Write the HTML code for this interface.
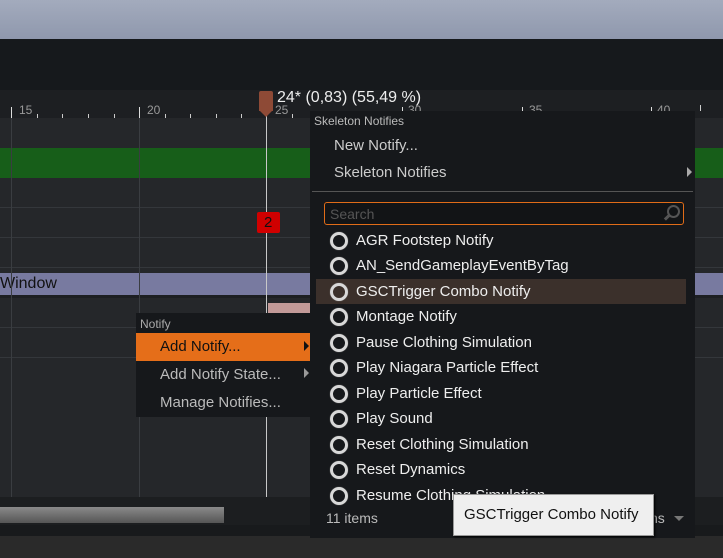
<!DOCTYPE html>
<html><head><style>
*{margin:0;padding:0;box-sizing:border-box}
body{width:723px;height:558px;overflow:hidden;position:relative;background:#25272a;font-family:"Liberation Sans",sans-serif}
.a{position:absolute}
.t{position:absolute;white-space:nowrap}
.ring{position:absolute;width:18px;height:18px;border-radius:50%;border:3px solid #d8d8d8;box-shadow:0 0 1px #888}
</style></head><body>
<div class="a" style="left:0;top:0;width:723px;height:39px;background:linear-gradient(#a3abbd,#8f98ad)"></div>
<div class="a" style="left:0;top:39px;width:723px;height:51px;background:#16191c"></div>
<div class="a" style="left:0;top:90px;width:723px;height:28px;background:#1d1f22"></div>
<!-- grid -->
<div class="a" style="left:0;top:148px;width:723px;height:30px;background:#175e19"></div>
<div class="a" style="left:0;top:207px;width:723px;height:1px;background:#34373b"></div>
<div class="a" style="left:0;top:237px;width:723px;height:1px;background:#34373b"></div>
<div class="a" style="left:0;top:267px;width:723px;height:1px;background:#34373b"></div>
<div class="a" style="left:0;top:273px;width:723px;height:22px;background:#787aa0"></div>
<div class="t" style="left:0;top:275px;font-size:16px;color:#111">Window</div>
<div class="a" style="left:0;top:295px;width:723px;height:3px;background:#1d1f22"></div>
<div class="a" style="left:0;top:327px;width:723px;height:1px;background:#34373b"></div>
<div class="a" style="left:0;top:357px;width:723px;height:1px;background:#34373b"></div>
<div class="a" style="left:11px;top:118px;width:1px;height:380px;background:#3a3d41"></div>
<div class="a" style="left:139px;top:118px;width:1px;height:380px;background:#3a3d41"></div>
<!-- ruler ticks -->
<div class="a" style="left:11px;top:107px;width:1px;height:11px;background:#ddd"></div>
<div class="t" style="left:19px;top:103px;font-size:12px;color:#999">15</div>
<div class="a" style="left:139px;top:107px;width:1px;height:11px;background:#ddd"></div>
<div class="t" style="left:147px;top:103px;font-size:12px;color:#999">20</div>
<div class="t" style="left:275px;top:103px;font-size:12px;color:#999">25</div>
<div class="a" style="left:402px;top:107px;width:1px;height:11px;background:#ddd"></div>
<div class="t" style="left:408px;top:103px;font-size:12px;color:#999">30</div>
<div class="a" style="left:522px;top:107px;width:1px;height:11px;background:#ddd"></div>
<div class="t" style="left:529px;top:103px;font-size:12px;color:#999">35</div>
<div class="a" style="left:651px;top:107px;width:1px;height:11px;background:#ddd"></div>
<div class="t" style="left:657px;top:103px;font-size:12px;color:#999">40</div>
<div class="a" style="left:37px;top:114px;width:1px;height:4px;background:#ccc"></div>
<div class="a" style="left:62px;top:114px;width:1px;height:4px;background:#ccc"></div>
<div class="a" style="left:88px;top:114px;width:1px;height:4px;background:#ccc"></div>
<div class="a" style="left:114px;top:114px;width:1px;height:4px;background:#ccc"></div>
<div class="a" style="left:165px;top:114px;width:1px;height:4px;background:#ccc"></div>
<div class="a" style="left:190px;top:114px;width:1px;height:4px;background:#ccc"></div>
<div class="a" style="left:216px;top:114px;width:1px;height:4px;background:#ccc"></div>
<div class="a" style="left:241px;top:114px;width:1px;height:4px;background:#ccc"></div>
<div class="a" style="left:292px;top:114px;width:1px;height:4px;background:#ccc"></div>
<div class="a" style="left:700px;top:105px;width:1px;height:6px;background:#ccc"></div>
<!-- playhead -->
<div class="a" style="left:266px;top:110px;width:1px;height:387px;background:#c8c8c8"></div>
<div class="a" style="left:259px;top:91px;width:14px;height:20px;background:#8e4a36;border-radius:2px 2px 0 0"></div>
<div class="a" style="left:259px;top:110px;width:0;height:0;border-left:7px solid transparent;border-right:7px solid transparent;border-top:7px solid #8e4a36"></div>
<div class="t" style="left:277px;top:89px;font-size:16px;color:#eee">24* (0,83) (55,49 %)</div>
<div class="a" style="left:257px;top:212px;width:23px;height:21px;background:#d00000;border-radius:2px"></div>
<div class="t" style="left:264px;top:214px;font-size:15px;color:#111">2</div>
<div class="a" style="left:268px;top:303px;width:42px;height:15px;background:#c29a98"></div>
<!-- bottom -->
<div class="a" style="left:0;top:497px;width:723px;height:28px;background:#1c1e20"></div>
<div class="a" style="left:0;top:507px;width:224px;height:16px;background:linear-gradient(#8a8a8a,#555)"></div>
<div class="a" style="left:0;top:525px;width:723px;height:11px;background:#181a1c"></div>
<div class="a" style="left:0;top:536px;width:723px;height:22px;background:#2a2a2a"></div>
<!-- left menu -->
<div class="a" style="left:136px;top:313px;width:175px;height:104px;background:#16181b"></div>
<div class="t" style="left:140px;top:317px;font-size:12px;color:#aaa">Notify</div>
<div class="a" style="left:136px;top:333px;width:175px;height:28px;background:#e56e19"></div>
<div class="t" style="left:160px;top:338px;font-size:15px;color:#111">Add Notify...</div>
<div class="a" style="left:304px;top:341px;border-top:5px solid transparent;border-bottom:5px solid transparent;border-left:5px solid #111"></div>
<div class="t" style="left:160px;top:366px;font-size:15px;color:#bbb">Add Notify State...</div>
<div class="a" style="left:304px;top:368px;border-top:5px solid transparent;border-bottom:5px solid transparent;border-left:5px solid #999"></div>
<div class="t" style="left:160px;top:394px;font-size:15px;color:#bbb">Manage Notifies...</div>
<!-- right menu -->
<div class="a" style="left:310px;top:111px;width:385px;height:427px;background:#16181b"></div>
<div class="t" style="left:314px;top:114px;font-size:12px;color:#bbb">Skeleton Notifies</div>
<div class="t" style="left:334px;top:137px;font-size:15px;color:#ccc">New Notify...</div>
<div class="t" style="left:334px;top:164px;font-size:15px;color:#ccc">Skeleton Notifies</div>
<div class="a" style="left:687px;top:167px;border-top:5px solid transparent;border-bottom:5px solid transparent;border-left:5px solid #aaa"></div>
<div class="a" style="left:312px;top:191px;width:381px;height:1px;background:#555"></div>
<div class="a" style="left:324px;top:202px;width:360px;height:23px;border:1px solid #e06c18;border-radius:3px;background:#121416"></div>
<div class="t" style="left:330px;top:206px;font-size:14px;color:#555">Search</div>
<div class="a" style="left:667px;top:205px;width:13px;height:13px;border:2px solid #555;border-radius:50%"></div>
<div class="a" style="left:664px;top:216px;width:6px;height:3px;background:#555;transform:rotate(-45deg)"></div>
<div class="a" style="left:316px;top:279px;width:370px;height:25px;background:#3b302b"></div>
<div class="ring" style="left:330px;top:232px"></div><div class="t" style="left:356px;top:232px;font-size:15px;color:#eee">AGR Footstep Notify</div>
<div class="ring" style="left:330px;top:257px"></div><div class="t" style="left:356px;top:257px;font-size:15px;color:#eee">AN_SendGameplayEventByTag</div>
<div class="ring" style="left:330px;top:283px"></div><div class="t" style="left:356px;top:283px;font-size:15px;color:#eee">GSCTrigger Combo Notify</div>
<div class="ring" style="left:330px;top:308px"></div><div class="t" style="left:356px;top:308px;font-size:15px;color:#eee">Montage Notify</div>
<div class="ring" style="left:330px;top:334px"></div><div class="t" style="left:356px;top:334px;font-size:15px;color:#eee">Pause Clothing Simulation</div>
<div class="ring" style="left:330px;top:359px"></div><div class="t" style="left:356px;top:359px;font-size:15px;color:#eee">Play Niagara Particle Effect</div>
<div class="ring" style="left:330px;top:385px"></div><div class="t" style="left:356px;top:385px;font-size:15px;color:#eee">Play Particle Effect</div>
<div class="ring" style="left:330px;top:410px"></div><div class="t" style="left:356px;top:410px;font-size:15px;color:#eee">Play Sound</div>
<div class="ring" style="left:330px;top:436px"></div><div class="t" style="left:356px;top:436px;font-size:15px;color:#eee">Reset Clothing Simulation</div>
<div class="ring" style="left:330px;top:461px"></div><div class="t" style="left:356px;top:461px;font-size:15px;color:#eee">Reset Dynamics</div>
<div class="ring" style="left:330px;top:487px"></div><div class="t" style="left:356px;top:487px;font-size:15px;color:#eee">Resume Clothing Simulation</div>
<div class="t" style="left:326px;top:510px;font-size:14px;color:#bbb">11 items</div>
<div class="t" style="left:650px;top:510px;font-size:14px;color:#bbb">ns</div>
<div class="a" style="left:674px;top:516px;border-left:5px solid transparent;border-right:5px solid transparent;border-top:5px solid #777"></div>
<div class="a" style="left:453px;top:494px;width:201px;height:42px;background:#efefef;border:1px solid #999;box-shadow:1px 1px 2px #000"></div>
<div class="t" style="left:464px;top:506px;font-size:15px;color:#111">GSCTrigger Combo Notify</div>
</body></html>
